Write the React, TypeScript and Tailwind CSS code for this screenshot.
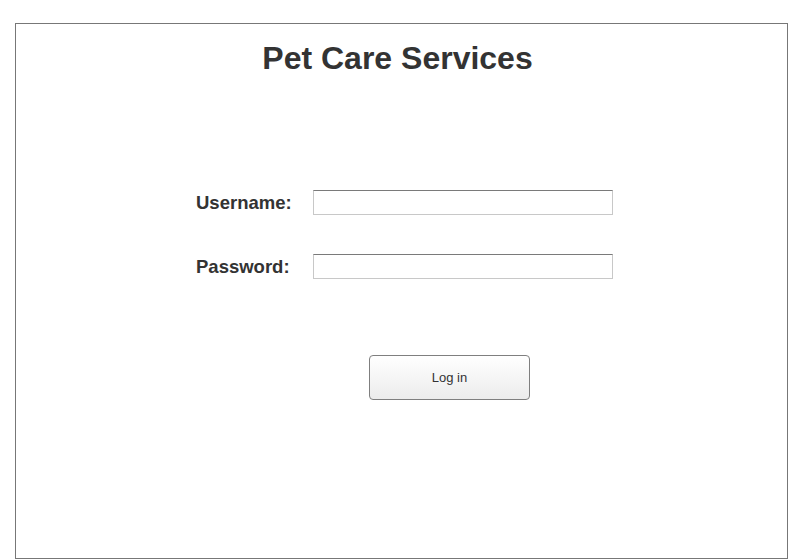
import React from "react";

export default function App() {
  return (
    <div className="w-[788px] h-[559px] bg-white pt-[23px] pl-[15px]" style={{ fontFamily: '"Liberation Sans", Arial, sans-serif' }}>
      <div className="w-[773px] h-[536px] border border-[#777777] flex flex-col">
        <h1 className="mt-[16px] text-center text-[32px] leading-[36px] font-bold text-[#333333] pr-[8px]">
          Pet Care Services
        </h1>
        <div className="ml-[180px] mt-[114px] flex flex-col">
          <div className="flex items-center h-[25px]">
            <label className="w-[117px] text-[18.5px] font-bold text-[#333333] leading-[22px]">Username:</label>
            <input type="text" className="w-[300px] h-[25px] border border-[#c8c8c8] border-t-[#7a7a7a] bg-white outline-none" />
          </div>
          <div className="flex items-center h-[25px] mt-[39px]">
            <label className="w-[117px] text-[18.5px] font-bold text-[#333333] leading-[22px]">Password:</label>
            <input type="password" className="w-[300px] h-[25px] border border-[#c8c8c8] border-t-[#7a7a7a] bg-white outline-none" />
          </div>
          <button className="ml-[173px] mt-[76px] w-[161px] h-[45px] rounded-[4px] border border-[#7f7f7f] bg-gradient-to-b from-white to-[#ececec] text-[13px] leading-[16px] pt-[1px] text-[#333333]">
            Log in
          </button>
        </div>
      </div>
    </div>
  );
}
